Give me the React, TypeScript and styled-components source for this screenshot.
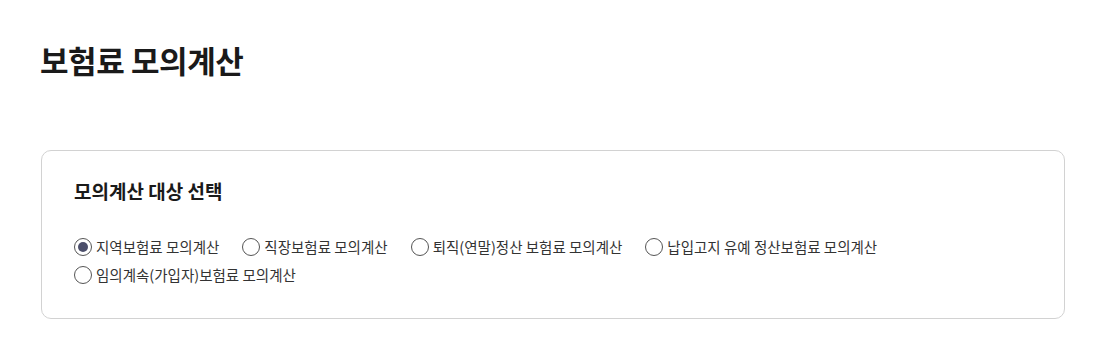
import styled, { createGlobalStyle } from "styled-components";
import { useState } from "react";

const GlobalStyle = createGlobalStyle`
  body {
    margin: 0;
    background: #fff;
    font-family: "Noto Sans CJK KR", "Noto Sans", sans-serif;
    color: #222;
  }
`;

const options = [
  "지역보험료 모의계산",
  "직장보험료 모의계산",
  "퇴직(연말)정산 보험료 모의계산",
  "납입고지 유예 정산보험료 모의계산",
  "임의계속(가입자)보험료 모의계산",
];

function App() {
  const [selected, setSelected] = useState(0);
  return (
    <>
      <GlobalStyle />
      <Page>
        <Title>보험료 모의계산</Title>
        <Card>
          <CardTitle>모의계산 대상 선택</CardTitle>
          <RadioGroup>
            {options.map((label, i) => (
              <RadioLabel key={label} onClick={() => setSelected(i)}>
                <RadioCircle checked={selected === i} />
                <RadioText>{label}</RadioText>
              </RadioLabel>
            ))}
          </RadioGroup>
        </Card>
      </Page>
    </>
  );
}

const Page = styled.div`
  padding: 36px 33px 0 41px;
`;

const Title = styled.h1`
  margin: 0 0 66px -1px;
  font-size: 31px;
  line-height: 48px;
  font-weight: 700;
  color: #1a1a1a;
  letter-spacing: -0.4px;
`;

const Card = styled.div`
  border: 1px solid #d2d2d2;
  border-radius: 10px;
  padding: 26px 32px 33px 32px;
`;

const CardTitle = styled.h2`
  margin: 0 0 31px;
  font-size: 19px;
  line-height: 28px;
  font-weight: 700;
  color: #1a1a1a;
`;

const RadioGroup = styled.div`
  display: flex;
  flex-wrap: wrap;
  column-gap: 23px;
  row-gap: 7px;
`;

const RadioLabel = styled.label`
  display: flex;
  align-items: center;
  gap: 4px;
  cursor: pointer;
`;

const RadioCircle = styled.span<{ checked: boolean }>`
  box-sizing: border-box;
  width: 18px;
  height: 18px;
  border-radius: 50%;
  border: 1px solid #555;
  display: flex;
  align-items: center;
  justify-content: center;

  &::after {
    content: "";
    width: 10px;
    height: 10px;
    border-radius: 50%;
    background: #4c4f6b;
    display: ${(p) => (p.checked ? "block" : "none")};
  }
`;

const RadioText = styled.span`
  font-size: 14.5px;
  line-height: 21px;
  color: #333;
`;

export default App;
